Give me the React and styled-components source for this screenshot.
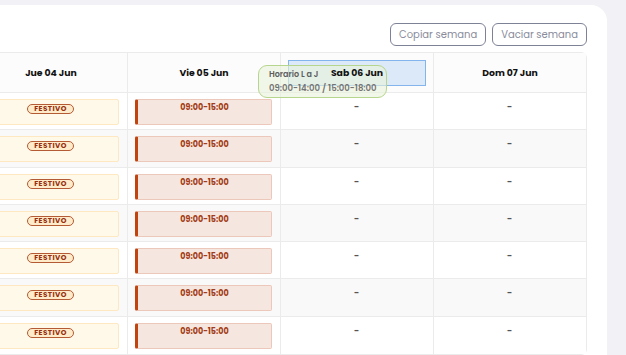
import React from 'react';
import styled, { createGlobalStyle } from 'styled-components';

const GlobalStyle = createGlobalStyle`
  html, body { margin: 0; padding: 0; background: #f2f2f6; overflow: hidden; }
  body { font-family: Poppins, Inter, "Noto Sans", sans-serif; }
  * { box-sizing: border-box; }
`;

const Page = styled.div`
  display: flex;
  justify-content: flex-end;
  align-items: flex-start;
  padding: 5px 19px 0 0;
  height: 355px;
`;

const Card = styled.section`
  flex-shrink: 0;
  background: #fff;
  border-radius: 16px;
  padding: 18px 20px 20px;
  display: flex;
  flex-direction: column;
  gap: 6px;
`;

const Toolbar = styled.div`
  display: flex;
  justify-content: flex-end;
  gap: 6px;
`;

const ToolButton = styled.button`
  height: 23px;
  padding: 0 8px;
  border: 1px solid #7e8297;
  border-radius: 6px;
  background: #fff;
  color: #8a8c9c;
  font-family: Poppins, Inter, sans-serif;
  font-size: 10px;
  font-weight: 400;
  cursor: pointer;
`;

const Table = styled.div`
  border: 1px solid #ebebeb;
  border-radius: 6px;
  background: #fff;
`;

const Row = styled.div`
  display: grid;
  grid-template-columns: 170px repeat(7, 153px);
  background: ${p => (p.$striped ? '#f9f9f9' : '#fff')};
  border-bottom: 1px solid #ebebeb;
  height: ${p => (p.$head ? '40px' : '37.25px')};
  &:last-child { border-bottom: none; }
`;

const HeadCell = styled.div`
  position: relative;
  padding: 7px 7px 6px;
  border-left: ${p => (p.$first ? 'none' : '1px solid #ebebeb')};
  background: #fcfcfc;
`;

const HeadLabel = styled.div`
  height: 100%;
  display: flex;
  align-items: center;
  justify-content: center;
  border: 1.5px solid ${p => (p.$drop ? '#84b4ec' : 'transparent')};
  background: ${p => (p.$drop ? '#dce9f8' : 'transparent')};
`;

const HeadText = styled.span`
  position: relative;
  z-index: 3;
  font-size: 9.3px;
  font-weight: 700;
  color: #111;
`;

const Cell = styled.div`
  padding: 6px 8px 0 7px;
  border-left: ${p => (p.$first ? 'none' : '1px solid #ebebeb')};
  font-size: 9px;
  color: #333;
`;

const HolidayBox = styled.div`
  height: 26px;
  background: #fff9ea;
  border: 1px solid #fde8c2;
  border-radius: 2px;
  display: flex;
  justify-content: center;
  padding-top: 4px;
`;

const HolidayPill = styled.span`
  height: 10px;
  padding: 0 6px;
  border: 1px solid #b45a35;
  border-radius: 6px;
  background: #fdebc9;
  color: #962f0e;
  font-size: 7.2px;
  font-weight: 700;
  letter-spacing: 0.45px;
  line-height: 8px;
  display: flex;
  align-items: center;
`;

const ShiftBox = styled.div`
  height: 26px;
  background: #f5e6e0;
  border: 1px solid #ecc8ba;
  border-left: 3px solid #c1440e;
  border-radius: 2px;
  text-align: center;
  padding-top: 3px;
  font-size: 8px;
  font-weight: 700;
  line-height: 10px;
  color: #a33c15;
`;

const Empty = styled.div`
  text-align: center;
  padding-top: 3px;
  font-size: 9px;
  font-weight: 700;
  line-height: 10px;
  color: #555;
`;

const Ghost = styled.div`
  position: absolute;
  left: -23px;
  top: 12px;
  width: 129px;
  height: 33px;
  border: 1.5px solid #b7d68d;
  border-radius: 9px;
  background: rgba(234, 244, 218, 0.6);
  padding: 3px 0 0 10px;
  display: flex;
  flex-direction: column;
  gap: 1px;
  z-index: 2;
  pointer-events: none;
`;

const GhostTitle = styled.span`
  font-size: 8px;
  font-weight: 600;
  line-height: 12px;
  color: #5d5d5d;
`;

const GhostTime = styled.span`
  font-size: 8.5px;
  font-weight: 600;
  line-height: 12px;
  color: #737373;
`;

const days = ['Lun 01 Jun', 'Mar 02 Jun', 'Mie 03 Jun', 'Jue 04 Jun', 'Vie 05 Jun', 'Sab 06 Jun', 'Dom 07 Jun'];
const employees = ['Ana García', 'Luis Pérez', 'Marta López', 'Jorge Ruiz', 'Elena Sanz', 'Pablo Díaz', 'Sara Gil'];

function DayCell({ day }) {
  if (day === 3) return <HolidayBox><HolidayPill>FESTIVO</HolidayPill></HolidayBox>;
  if (day <= 4) return <ShiftBox>09:00-15:00</ShiftBox>;
  return <Empty>-</Empty>;
}

export default function App() {
  return (
    <>
      <GlobalStyle />
      <Page>
        <Card>
          <Toolbar>
            <ToolButton>Copiar semana</ToolButton>
            <ToolButton>Vaciar semana</ToolButton>
          </Toolbar>
          <Table>
            <Row $head>
              <HeadCell $first><HeadLabel><HeadText>Empleado</HeadText></HeadLabel></HeadCell>
              {days.map((d, i) => (
                <HeadCell key={d}>
                  <HeadLabel $drop={i === 5}><HeadText>{d}</HeadText></HeadLabel>
                  {i === 5 && (
                    <Ghost>
                      <GhostTitle>Horario L a J</GhostTitle>
                      <GhostTime>09:00-14:00 / 15:00-18:00</GhostTime>
                    </Ghost>
                  )}
                </HeadCell>
              ))}
            </Row>
            {employees.map((e, r) => (
              <Row key={e} $striped={r % 2 === 1}>
                <Cell $first>{e}</Cell>
                {days.map((d, i) => (
                  <Cell key={d}><DayCell day={i} /></Cell>
                ))}
              </Row>
            ))}
          </Table>
        </Card>
      </Page>
    </>
  );
}
